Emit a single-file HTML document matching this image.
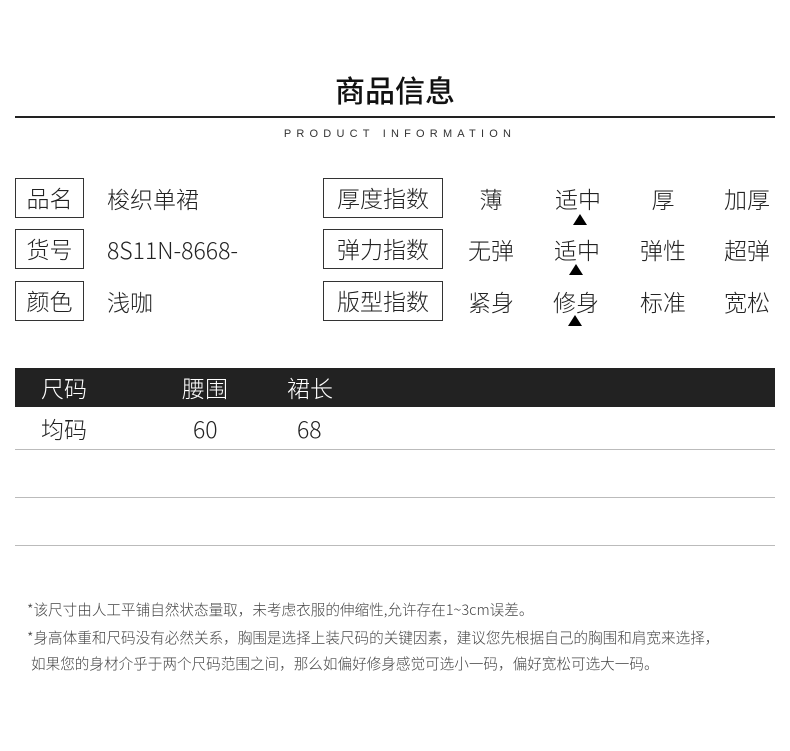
<!DOCTYPE html>
<html><head><meta charset="utf-8"><style>
*{margin:0;padding:0;box-sizing:border-box}
body{width:790px;height:751px;background:#fff;position:relative;font-family:"Liberation Sans","Noto Sans CJK SC",sans-serif;color:#222;overflow:hidden}
.a{position:absolute;white-space:nowrap}
.t{font-size:30px;font-weight:500;left:0;width:790px;text-align:center;top:69px;line-height:40px;color:#111}
.box{position:absolute;border:1.5px solid #333;font-size:23px;line-height:36px;text-align:center;font-family:"Noto Sans CJK SC",sans-serif;font-weight:300}
.v{font-size:23px;line-height:30px;font-family:"Noto Sans CJK SC",sans-serif;font-weight:300}
.c{width:80px;text-align:center;margin-left:-40px}
.tri{position:absolute;width:0;height:0;border-left:7px solid transparent;border-right:7px solid transparent;border-bottom:11px solid #000}
.hl{position:absolute;left:15px;width:760px;height:1px;background:#bbb}
.n{font-size:14.6px;color:#444;font-family:"Noto Sans CJK SC",sans-serif;font-weight:300}
</style></head><body>
<div class="a t" style="font-family:'Noto Sans CJK SC',sans-serif">商品信息</div>
<div class="a" style="left:15px;top:116px;width:760px;height:2px;background:#222"></div>
<div class="a" style="left:5px;width:790px;text-align:center;top:128px;font-size:11px;letter-spacing:5.2px;font-family:'Liberation Sans',sans-serif;color:#333">PRODUCT INFORMATION</div>

<div class="box" style="left:15px;top:178px;width:69px;height:40px">品名</div>
<div class="box" style="left:15px;top:229px;width:69px;height:40px">货号</div>
<div class="box" style="left:15px;top:281px;width:69px;height:40px">颜色</div>
<div class="a v" style="left:107px;top:183px">梭织单裙</div>
<div class="a v" style="left:107px;top:234px">8S11N-8668-</div>
<div class="a v" style="left:107px;top:286px">浅咖</div>

<div class="box" style="left:323px;top:178px;width:120px;height:40px">厚度指数</div>
<div class="box" style="left:323px;top:229px;width:120px;height:40px">弹力指数</div>
<div class="box" style="left:323px;top:281px;width:120px;height:40px">版型指数</div>

<div class="a v c" style="left:491px;top:183px">薄</div>
<div class="a v c" style="left:578px;top:183px">适中</div>
<div class="a v c" style="left:663px;top:183px">厚</div>
<div class="a v c" style="left:747px;top:183px">加厚</div>
<div class="a v c" style="left:491px;top:234px">无弹</div>
<div class="a v c" style="left:577px;top:234px">适中</div>
<div class="a v c" style="left:663px;top:234px">弹性</div>
<div class="a v c" style="left:747px;top:234px">超弹</div>
<div class="a v c" style="left:491px;top:286px">紧身</div>
<div class="a v c" style="left:576px;top:286px">修身</div>
<div class="a v c" style="left:663px;top:286px">标准</div>
<div class="a v c" style="left:747px;top:286px">宽松</div>
<div class="tri" style="left:573px;top:214px"></div>
<div class="tri" style="left:569px;top:264px"></div>
<div class="tri" style="left:568px;top:315px"></div>

<div class="a" style="left:15px;top:368px;width:760px;height:39px;background:#222"></div>
<div class="a v" style="left:41px;top:372px;color:#fff">尺码</div>
<div class="a v" style="left:182px;top:372px;color:#fff">腰围</div>
<div class="a v" style="left:287px;top:372px;color:#fff">裙长</div>
<div class="a v" style="left:41px;top:413px">均码</div>
<div class="a v" style="left:193px;top:413px">60</div>
<div class="a v" style="left:297px;top:413px">68</div>
<div class="hl" style="top:449px"></div>
<div class="hl" style="top:497px"></div>
<div class="hl" style="top:545px"></div>

<div class="a n" style="left:27px;top:599px">*该尺寸由人工平铺自然状态量取，未考虑衣服的伸缩性,允许存在1~3cm误差。</div>
<div class="a n" style="left:27px;top:627px">*身高体重和尺码没有必然关系，胸围是选择上装尺码的关键因素，建议您先根据自己的胸围和肩宽来选择，</div>
<div class="a n" style="left:31px;top:653px">如果您的身材介乎于两个尺码范围之间，那么如偏好修身感觉可选小一码，偏好宽松可选大一码。</div>
</body></html>
